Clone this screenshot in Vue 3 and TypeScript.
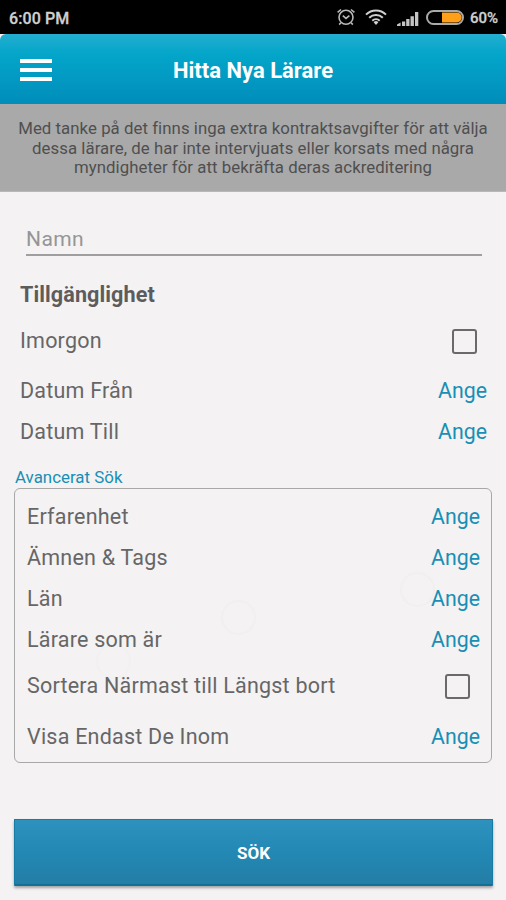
<script setup lang="ts">
import { reactive, ref } from 'vue'

interface FormRow {
  id: string
  label: string
  kind: 'link' | 'check'
}

const availability: FormRow[] = [
  { id: 'tomorrow', label: 'Imorgon', kind: 'check' },
  { id: 'from', label: 'Datum Från', kind: 'link' },
  { id: 'to', label: 'Datum Till', kind: 'link' },
]

const advanced: FormRow[] = [
  { id: 'experience', label: 'Erfarenhet', kind: 'link' },
  { id: 'subjects', label: 'Ämnen & Tags', kind: 'link' },
  { id: 'county', label: 'Län', kind: 'link' },
  { id: 'teacher', label: 'Lärare som är', kind: 'link' },
  { id: 'sort', label: 'Sortera Närmast till Längst bort', kind: 'check' },
  { id: 'within', label: 'Visa Endast De Inom', kind: 'link' },
]

const name = ref('')
const checked = reactive<Record<string, boolean>>({ tomorrow: false, sort: false })
</script>

<template>
  <div class="screen">
    <div class="status">
      <span class="clock">6:00 PM</span>
      <svg class="alarm" width="20" height="18" viewBox="0 0 20 18">
        <circle cx="10" cy="9.3" r="7" />
        <path d="M1.6 4.4 5 1.5M18.4 4.4 15 1.5M4.8 14.8 3.2 16.6M15.2 14.8l1.6 1.8M6.8 7.6l3.2 2.8 3.4-2.8" />
      </svg>
      <svg class="wifi" width="22" height="16" viewBox="0 0 22 16">
        <path d="M1 5.6a14.2 14.2 0 0 1 20 0M4.2 8.8a9.7 9.7 0 0 1 13.6 0M7.3 11.8a5.3 5.3 0 0 1 7.4 0" />
        <path class="dot" d="M8.6 13.3a3.4 3.4 0 0 1 4.8 0L11 16z" />
      </svg>
      <svg class="signal" width="22" height="14" viewBox="0 0 22 14">
        <path d="M0 14v-1.4l3.6-2V14zM5 9.5h3.2V14H5zM9.2 7h3.3v7H9.2zM13.5 4.2h3.4V14h-3.4zM18 0h3.3v14H18z" />
      </svg>
      <svg class="battery" width="38" height="15" viewBox="0 0 38 15">
        <rect class="shell" x="1" y="1" width="36" height="13" rx="6.5" />
        <path d="M16 2.6h14.8a4.9 4.9 0 0 1 0 9.8H16z" />
      </svg>
      <span class="percent">60%</span>
    </div>

    <header class="bar">
      <button class="menu" aria-label="Meny"><i></i><i></i><i></i></button>
      <h1>Hitta Nya Lärare</h1>
    </header>

    <p class="notice">
      Med tanke på det finns inga extra kontraktsavgifter för att välja<br />
      dessa lärare, de har inte intervjuats eller korsats med några<br />
      myndigheter för att bekräfta deras ackreditering
    </p>

    <main>
      <input v-model="name" class="name" type="text" placeholder="Namn" />
      <h2>Tillgänglighet</h2>
      <div class="rows">
        <div v-for="row in availability" :key="row.id" class="row" :class="row.kind">
          <span class="label">{{ row.label }}</span>
          <a v-if="row.kind === 'link'">Ange</a>
          <input v-else v-model="checked[row.id]" type="checkbox" />
        </div>
      </div>
      <h3>Avancerat Sök</h3>
      <section class="panel">
        <i class="ring r1"></i><i class="ring r2"></i><i class="ring r3"></i>
        <div v-for="row in advanced" :key="row.id" class="row" :class="[row.kind, row.id]">
          <span class="label">{{ row.label }}</span>
          <a v-if="row.kind === 'link'">Ange</a>
          <input v-else v-model="checked[row.id]" type="checkbox" />
        </div>
      </section>
      <button class="search">SÖK</button>
    </main>
  </div>
</template>

<style>
body { margin: 0; background: #f4f2f3; }
</style>

<style scoped>
* { box-sizing: border-box; }
.screen {
  width: 506px;
  height: 900px;
  overflow: hidden;
  background: #f4f2f3;
  color: #676667;
  font-family: Roboto, sans-serif;
}
.status {
  height: 34px;
  padding: 0 8px 0 9px;
  display: flex;
  align-items: center;
  background: #000;
  color: #cfcfcf;
  font-size: 16px;
  font-weight: 500;
}
.clock { margin-right: auto; padding-top: 2px; letter-spacing: 0.1px; -webkit-text-stroke: 0.3px; }
.percent { padding-top: 2px; font-size: 15px; -webkit-text-stroke: 0.3px; }
.status svg { fill: #c4c4c4; flex: none; }
.status .alarm { fill: none; stroke: #b8b8b8; stroke-width: 1.6; margin-right: 9px; }
.status .wifi { fill: none; stroke: #d0d0d0; stroke-width: 2; margin-right: 10px; }
.status .wifi .dot { fill: #d0d0d0; stroke: none; }
.signal { margin: 3px 7px 0 0; }
.status .battery { fill: #ff9f1a; margin-right: 6px; }
.status .battery .shell { fill: none; stroke: #aaa; stroke-width: 2; }
.bar {
  height: 70px;
  display: grid;
  grid-template-columns: 76px 1fr 76px;
  align-items: center;
  border-radius: 6px 6px 0 0;
  border-bottom: 1px solid #1487ab;
  background: linear-gradient(#23aed0, #04a6ca 28%, #008dba);
}
.menu {
  width: 32px;
  margin: 2px 0 0 20px;
  padding: 0;
  border: 0;
  background: none;
  display: grid;
  gap: 5px;
}
.menu i { height: 4px; background: #fff; }
h1 { margin: 3px 0 0; text-align: center; font-size: 22px; font-weight: 700; color: #fff; }
.notice {
  height: 88px;
  margin: 0;
  padding-top: 15px;
  background: #a9a9a9;
  border-bottom: 1px solid #b9b9b9;
  color: #4f4f4f;
  font-size: 16.8px;
  letter-spacing: 0.05px;
  line-height: 19.7px;
  text-align: center;
  white-space: nowrap;
}
main { padding: 29px 14px 0; }
.name {
  display: block;
  width: 456px;
  height: 35px;
  margin: 0 0 0 12px;
  padding: 2px 0 0;
  border: 0;
  border-bottom: 2px solid #a09fa0;
  border-radius: 0;
  background: none;
  outline: 0;
  font: 21px Roboto, sans-serif;
  letter-spacing: 0.4px;
}
.name::placeholder { color: #969596; opacity: 1; }
h2 { margin: 22px 0 0 6px; height: 33px; line-height: 34px; font-size: 21.6px; font-weight: 700; letter-spacing: 0.08px; color: #5d5c5d; }
.rows { padding: 0 5px 0 6px; }
.row { height: 41px; display: flex; align-items: center; justify-content: space-between; font-size: 21.5px; line-height: 26px; }
.label { letter-spacing: 0.22px; }
.rows .check { height: 59px; }
.row a { color: #198fb5; font-size: 21.3px; }
.row input {
  appearance: none;
  width: 25px;
  height: 25px;
  margin: 2px 10px 0 0;
  border: 2.5px solid #6b6a6b;
  border-radius: 3px;
}
h3 { margin: 14px 0 0 1px; height: 22px; line-height: 22px; font-size: 16.9px; font-weight: 400; color: #198fb5; }
.panel {
  position: relative;
  width: 478px;
  height: 275px;
  padding: 7px 11px 0 12px;
  border: 1.5px solid #a9a8a9;
  border-radius: 6px;
}
.panel .check { height: 51px; }
.panel .within { height: 51px; }
.ring { position: absolute; width: 35px; height: 35px; border: 2px solid #f1eff0; border-radius: 50%; }
.r1 { left: 206px; top: 111px; }
.r2 { left: 385px; top: 83px; }
.r3 { left: 81px; top: 155px; border-color: #f2f0f1; }
.label, .row a { position: relative; }
.search {
  display: block;
  width: 479px;
  height: 67px;
  margin-top: 56px;
  padding: 2px 0 0;
  border: 1px solid #167ba5;
  border-bottom: 2px solid #0f709a;
  border-radius: 1px;
  background: linear-gradient(#2d93be, #2288b3 55%, #247da4);
  box-shadow: 0 2px 3px #0005;
  color: #fff;
  font: 700 17px Roboto, sans-serif;
}
</style>
